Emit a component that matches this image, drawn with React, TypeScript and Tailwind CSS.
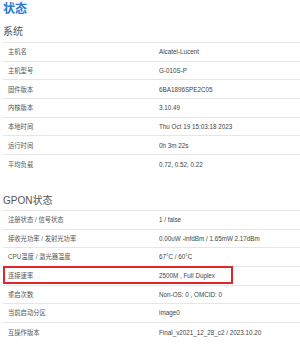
import React from "react";

const sys: [string, string][] = [
  ["主机名", "Alcatel-Lucent"],
  ["主机型号", "G-010S-P"],
  ["固件版本", "6BA1896SPE2C05"],
  ["内核版本", "3.10.49"],
  ["本地时间", "Thu Oct 19 15:03:18 2023"],
  ["运行时间", "0h 3m 22s"],
  ["平均负载", "0.72, 0.52, 0.22"],
];

const gpon: [string, string][] = [
  ["注册状态 / 信号状态", "1 / false"],
  ["接收光功率 / 发射光功率", "0.00uW -infdBm / 1.65mW 2.17dBm"],
  ["CPU温度 / 激光器温度", "67°C / 60°C"],
  ["连接速率", "2500M , Full Duplex"],
  ["重启次数", "Non-OS: 0 , OMCID: 0"],
  ["当前启动分区", "image0"],
  ["互操作版本", "Final_v2021_12_28_c2 / 2023.10.20"],
];

function Table({ rows, mark }: { rows: [string, string][]; mark?: number }) {
  return (
    <div className="border-t border-[#e6e6e6]">
      {rows.map(([k, v], i) => (
        <div
          key={i}
          className={`relative flex h-[18.7px] items-center text-[6.3px] ${
            i < rows.length - 1 ? "border-b border-[#e6e6e6]" : ""
          }`}
        >
          <div className="w-[156px] pl-[5px] text-[#555]">{k}</div>
          <div className="text-[#444]">{v}</div>
          {mark === i && (
            <div className="absolute left-0 top-[-0.5px] h-[18px] w-[230px] border-2 border-[#e0262b]" />
          )}
        </div>
      ))}
    </div>
  );
}

export default function App() {
  return (
    <div
      className="h-[348px] w-[300px] overflow-hidden bg-white pl-[3px]"
      style={{ fontFamily: '"Liberation Sans", Arial, "Noto Sans CJK SC", sans-serif' }}
    >
      <div className="h-[19px] text-[12px] font-bold leading-[19px] text-[#2b78d4]">状态</div>
      <div className="mt-[2px] h-[21px] text-[10px] leading-[21px] text-[#555]">系统</div>
      <Table rows={sys} />
      <div className="pt-[18px] text-[10px] leading-[18px] text-[#555]">GPON状态</div>
      <Table rows={gpon} mark={3} />
    </div>
  );
}
